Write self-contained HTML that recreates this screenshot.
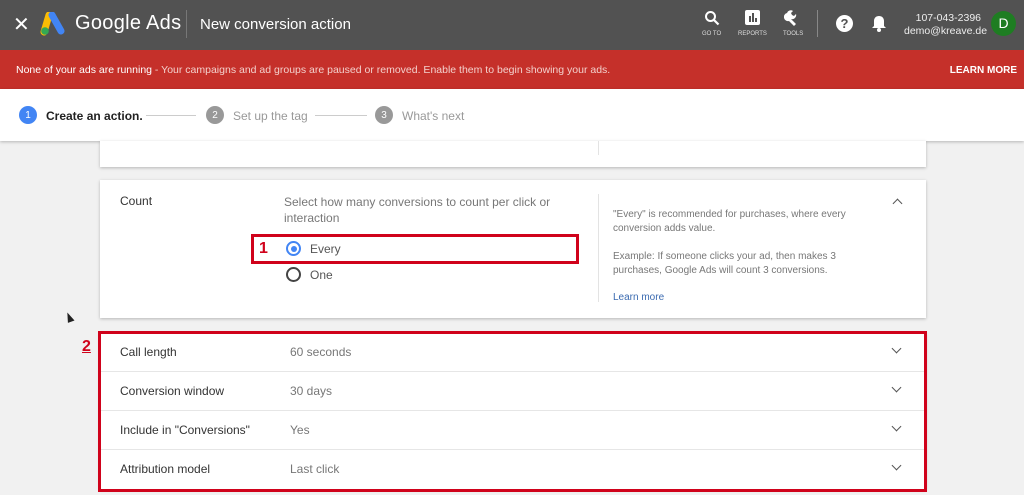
<!DOCTYPE html>
<html><head><meta charset="utf-8"><style>
*{margin:0;padding:0;box-sizing:border-box}
body{width:1024px;height:495px;overflow:hidden;background:#f1f1f1;font-family:"Liberation Sans",sans-serif;position:relative}
.abs{position:absolute;white-space:nowrap}
.hdr{left:0;top:0;width:1024px;height:50px;background:#525252}
.ban{left:0;top:50px;width:1024px;height:39px;background:#c5302a;color:#f3d0cc;font-size:10.5px}
.step{left:0;top:89px;width:1024px;height:52px;background:#fff;box-shadow:0 1px 3px rgba(0,0,0,.25)}
.card{background:#fff;box-shadow:0 1px 3px rgba(0,0,0,.25)}
.t{font-size:12px;color:#333}
.g{font-size:12px;color:#777}
.chev{width:7px;height:7px;border-right:1.6px solid #555;border-bottom:1.6px solid #555;transform:rotate(45deg)}
.row{left:0;width:824px;height:39px;border-bottom:1px solid #e6e6e6}
.num{width:18px;height:18px;border-radius:50%;color:#fff;font-size:10px;text-align:center;line-height:19px}
</style></head><body>
<div class="abs hdr"></div>
<div class="abs" style="left:13px;top:12px;color:#fff;font-size:20px">✕</div>
<svg class="abs" style="left:40px;top:12px" width="26" height="24" viewBox="0 0 26 24"><path d="M9 3 L4 20" stroke="#fbbc04" stroke-width="7" stroke-linecap="round"/><path d="M12 3 L21 19" stroke="#4285f4" stroke-width="7" stroke-linecap="round"/><circle cx="5" cy="19" r="3.8" fill="#34a853"/></svg>
<div class="abs" style="left:75px;top:12px;color:#fff;font-size:20px;letter-spacing:0.3px">Google Ads</div>
<div class="abs" style="left:186px;top:10px;width:1px;height:28px;background:#777"></div>
<div class="abs" style="left:200px;top:16px;color:#fff;font-size:15px">New conversion action</div>
<svg class="abs" style="left:704px;top:10px" width="16" height="16"><circle cx="6.5" cy="6.5" r="4.5" fill="none" stroke="#fff" stroke-width="2"/><path d="M10 10l4.5 4.5" stroke="#fff" stroke-width="2.2"/></svg>
<div class="abs" style="left:702px;top:31px;color:#ddd;font-size:6px">GO TO</div>
<div class="abs" style="left:745px;top:10px;width:15px;height:15px;background:#fff;border-radius:2px"><div class="abs" style="left:4px;top:6px;width:1.5px;height:6px;background:#525252"></div><div class="abs" style="left:7px;top:3px;width:1.5px;height:9px;background:#525252"></div><div class="abs" style="left:10px;top:8px;width:1.5px;height:4px;background:#525252"></div></div>
<div class="abs" style="left:738px;top:31px;color:#ddd;font-size:6px">REPORTS</div>
<svg class="abs" style="left:784px;top:8px" width="18" height="18"><path d="M3 5a4 4 0 0 1 6-2l-2 2 1 2 2 1 2-2a4 4 0 0 1-5 5l5 5-2 2-5-5a4 4 0 0 1-2-8z" fill="#fff"/></svg>
<div class="abs" style="left:783px;top:31px;color:#ddd;font-size:6px">TOOLS</div>
<div class="abs" style="left:817px;top:10px;width:1px;height:27px;background:#888"></div>
<div class="abs" style="left:836px;top:15px;width:17px;height:17px;border-radius:50%;background:#fff;color:#525252;font-size:13px;font-weight:bold;text-align:center;line-height:17px">?</div>
<svg class="abs" style="left:871px;top:14px" width="16" height="18"><path d="M8 2c3 0 5 2 5 5v5l2 2H1l2-2V7c0-3 2-5 5-5z" fill="#fff"/><circle cx="8" cy="16" r="2" fill="#fff"/></svg>
<div class="abs" style="left:904px;top:12px;color:#eee;font-size:10.5px;text-align:right;width:77px;line-height:13px">107-043-2396<br>demo@kreave.de</div>
<div class="abs" style="left:991px;top:11px;width:25px;height:25px;border-radius:50%;background:#1e7d22;color:#fff;font-size:14px;text-align:center;line-height:25px">D</div>
<div class="abs ban"><span class="abs" style="left:16px;top:14px"><b style="font-weight:normal;color:#fff">None of your ads are running</b> - Your campaigns and ad groups are paused or removed. Enable them to begin showing your ads.</span><span class="abs" style="right:7px;top:15px;color:#fff;font-size:10px;font-weight:bold">LEARN MORE</span></div>
<div class="abs step">
<div class="abs num" style="left:19px;top:17px;background:#4285f4">1</div>
<div class="abs" style="left:46px;top:20px;font-size:12px;color:#222;font-weight:bold">Create an action.</div>
<div class="abs" style="left:146px;top:26px;width:50px;height:1px;background:#ccc"></div>
<div class="abs num" style="left:206px;top:17px;background:#999">2</div>
<div class="abs" style="left:233px;top:20px;font-size:12px;color:#999">Set up the tag</div>
<div class="abs" style="left:315px;top:26px;width:52px;height:1px;background:#ccc"></div>
<div class="abs num" style="left:375px;top:17px;background:#999">3</div>
<div class="abs" style="left:402px;top:20px;font-size:12px;color:#999">What's next</div>
</div>
<div class="abs card" style="left:100px;top:141px;width:826px;height:26px"><div class="abs" style="left:498px;top:0;width:1px;height:14px;background:#e3e3e3"></div></div>
<div class="abs card" style="left:100px;top:180px;width:826px;height:138px">
<div class="abs t" style="left:20px;top:14px">Count</div>
<div class="abs g" style="left:184px;top:14px;line-height:16px;width:290px;white-space:normal">Select how many conversions to count per click or interaction</div>
<div class="abs" style="left:186px;top:61px;width:15px;height:15px;border-radius:50%;border:2px solid #4285f4"><div class="abs" style="left:2.5px;top:2.5px;width:6px;height:6px;border-radius:50%;background:#4285f4"></div></div>
<div class="abs g" style="left:210px;top:62px;color:#555">Every</div>
<div class="abs" style="left:186px;top:87px;width:15px;height:15px;border-radius:50%;border:2px solid #444"></div>
<div class="abs g" style="left:210px;top:88px;color:#555">One</div>
<div class="abs" style="left:498px;top:14px;width:1px;height:108px;background:#e3e3e3"></div>
<div class="abs" style="left:513px;top:28px;font-size:10px;color:#777;line-height:14px;width:260px;white-space:normal">"Every" is recommended for purchases, where every conversion adds value.<br><br>Example: If someone clicks your ad, then makes 3 purchases, Google Ads will count 3 conversions.</div>
<div class="abs" style="left:513px;top:112px;font-size:10px;color:#3a6ab0">Learn more</div>
<div class="abs chev" style="left:794px;top:20px;transform:rotate(-135deg)"></div>
</div>
<div class="abs" style="left:251px;top:234px;width:328px;height:30px;border:3px solid #d0021b"></div>
<div class="abs" style="left:259px;top:240px;color:#d0021b;font-size:16px;font-weight:bold">1</div>
<div class="abs" style="left:82px;top:338px;color:#d0021b;font-size:16px;font-weight:bold;text-decoration:underline">2</div>
<div class="abs card" style="left:100px;top:333px;width:826px;height:156px">
<div class="abs row" style="top:0"><span class="abs t" style="left:20px;top:12px">Call length</span><span class="abs g" style="left:190px;top:12px">60 seconds</span><div class="abs chev" style="left:793px;top:12px"></div></div>
<div class="abs row" style="top:39px"><span class="abs t" style="left:20px;top:12px">Conversion window</span><span class="abs g" style="left:190px;top:12px">30 days</span><div class="abs chev" style="left:793px;top:12px"></div></div>
<div class="abs row" style="top:78px"><span class="abs t" style="left:20px;top:12px">Include in "Conversions"</span><span class="abs g" style="left:190px;top:12px">Yes</span><div class="abs chev" style="left:793px;top:12px"></div></div>
<div class="abs row" style="top:117px;border:0"><span class="abs t" style="left:20px;top:12px">Attribution model</span><span class="abs g" style="left:190px;top:12px">Last click</span><div class="abs chev" style="left:793px;top:12px"></div></div>
</div>
<div class="abs" style="left:98px;top:331px;width:829px;height:161px;border:3px solid #d0021b"></div>
<div class="abs" style="left:66px;top:312px;width:0;height:0;border-left:3px solid transparent;border-right:4px solid transparent;border-bottom:10px solid #222;transform:rotate(-20deg)"></div>
</body></html>
